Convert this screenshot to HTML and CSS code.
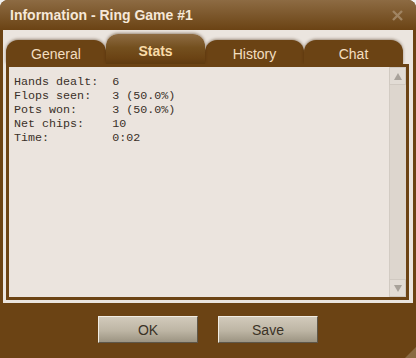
FILE: index.html
```html
<!DOCTYPE html>
<html lang="en">
<head>
    <meta charset="UTF-8">
    <title>Information - Ring Game #1</title>
    <link rel="stylesheet" href="styles.css">
</head>
<body>
    <div class="window">
        <div class="titlebar">
            <span class="title">Information - Ring Game #1</span>
            <svg class="close" width="11" height="11" viewBox="0 0 11 11">
                <path d="M1 1 L10 10 M10 1 L1 10" stroke="#a08462" stroke-width="2.4" fill="none"/>
            </svg>
        </div>

        <div class="frame">
            <!-- Tabs -->
            <div class="tabs">
                <div class="tab">General</div>
                <div class="tab active">Stats</div>
                <div class="tab">History</div>
                <div class="tab">Chat</div>
            </div>

            <div class="panel">
                <pre class="stats">Hands dealt:  6
Flops seen:   3 (50.0%)
Pots won:     3 (50.0%)
Net chips:    10
Time:         0:02</pre>
                <div class="scrollbar">
                    <div class="arrow"><span class="tri up"></span></div>
                    <div class="track"></div>
                    <div class="arrow"><span class="tri down"></span></div>
                </div>
            </div>
        </div>

        <div class="buttons">
            <button class="btn">OK</button>
            <button class="btn">Save</button>
        </div>

        <svg class="grip" width="11" height="11" viewBox="0 0 11 11">
            <path d="M11 0 L11 11 L0 11 Z" fill="#8a6a42"/>
        </svg>
    </div>
</body>
</html>
```

FILE: styles.css
```css
html, body {
    margin: 0;
    background: #f0f0f0;
    font-family: "Liberation Sans", Arial, sans-serif;
}

.window {
    position: relative;
    width: 416px;
    height: 358px;
    background: #6b4314;
    border-radius: 8px 8px 0 0;
    display: flex;
    flex-direction: column;
    overflow: hidden;
}

.titlebar {
    height: 30px;
    flex-shrink: 0;
    display: flex;
    align-items: center;
    justify-content: space-between;
    padding: 0 13px 0 10px;
    background: linear-gradient(#8d6b43, #7a5529 55%, #6b4314);
}

.title {
    color: #f6e8d8;
    font-size: 14px;
    font-weight: bold;
}

.frame {
    margin: 0 3px;
    padding: 4px 4px 3px 3px;
    background: #ebe5df;
    display: flex;
    flex-direction: column;
}

.tabs {
    height: 30px;
    display: flex;
    align-items: flex-end;
}

.tab {
    width: 99px;
    height: 24px;
    box-sizing: border-box;
    padding-top: 3px;
    display: flex;
    align-items: center;
    justify-content: center;
    color: #f3dec0;
    font-size: 14px;
    background: #6b4314;
    border-radius: 12px 12px 0 0;
    box-shadow: 0 -1px 3px rgba(60, 30, 0, 0.45);
}

.tab:first-child {
    width: 100px;
}

.tab.active {
    height: 30px;
    position: relative;
    z-index: 1;
    font-weight: bold;
    color: #f8dba8;
    background: linear-gradient(#8e6c44, #74501f 45%, #6b4314 80%, #5f3b10);
}

.panel {
    height: 230px;
    border: 3px solid #6b4314;
    background: #ebe4de;
    display: flex;
    position: relative;
    z-index: 2;
}

.stats {
    flex: 1;
    margin: 0;
    padding: 8px 5px;
    font-family: "Liberation Mono", "Courier New", monospace;
    font-size: 11.7px;
    line-height: 14px;
    color: #3a3028;
}

.scrollbar {
    width: 17px;
    display: flex;
    flex-direction: column;
    background: #ddd6ce;
}

.track {
    flex: 1;
    border-left: 1px solid #d2cbc3;
}

.arrow {
    height: 18px;
    background: #e2dcd5;
    border: 1px solid #d0c9c1;
    box-sizing: border-box;
    display: flex;
    align-items: center;
    justify-content: center;
}

.tri {
    width: 0;
    height: 0;
    border-left: 4px solid transparent;
    border-right: 4px solid transparent;
}

.tri.up {
    border-bottom: 7px solid #a8a29a;
}

.tri.down {
    border-top: 7px solid #a8a29a;
}

.buttons {
    display: flex;
    justify-content: center;
    gap: 20px;
    padding-top: 13px;
}

.btn {
    width: 100px;
    height: 27px;
    font-family: "Liberation Sans", Arial, sans-serif;
    font-size: 14px;
    color: #3a3226;
    background: linear-gradient(#d2cabb, #bdb5a4 55%, #9c9482);
    border: 1px solid;
    border-color: #f2ede4 #5e5648 #5e5648 #f2ede4;
    padding: 0;
    cursor: pointer;
}

.grip {
    position: absolute;
    right: 0;
    bottom: 0;
}
```
